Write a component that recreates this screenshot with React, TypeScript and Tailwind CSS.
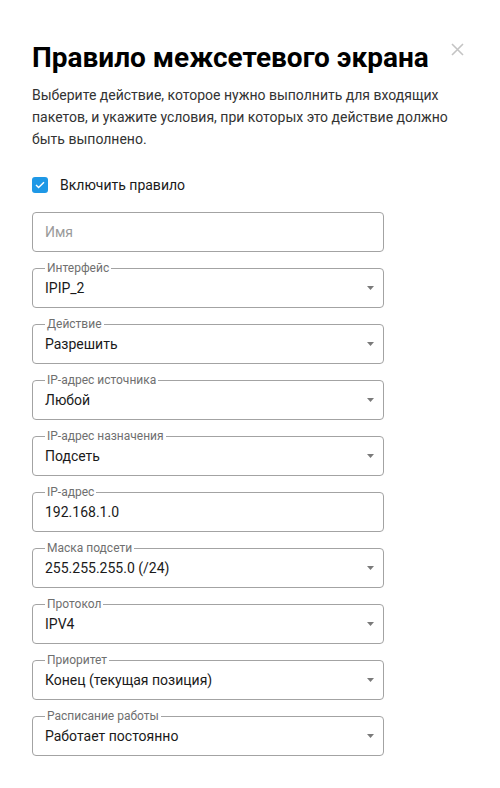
import React from 'react';

type Field = {
  label?: string;
  value?: string;
  placeholder?: string;
  select?: boolean;
};

const fields: Field[] = [
  { placeholder: 'Имя' },
  { label: 'Интерфейс', value: 'IPIP_2', select: true },
  { label: 'Действие', value: 'Разрешить', select: true },
  { label: 'IP-адрес источника', value: 'Любой', select: true },
  { label: 'IP-адрес назначения', value: 'Подсеть', select: true },
  { label: 'IP-адрес', value: '192.168.1.0' },
  { label: 'Маска подсети', value: '255.255.255.0 (/24)', select: true },
  { label: 'Протокол', value: 'IPV4', select: true },
  { label: 'Приоритет', value: 'Конец (текущая позиция)', select: true },
  { label: 'Расписание работы', value: 'Работает постоянно', select: true },
];

function FormField({ label, value, placeholder, select }: Field) {
  return (
    <div className="relative flex h-10 w-[352px] items-center rounded border border-[#a3a3a3] pl-3 pr-[9px]">
      {label && (
        <span className="absolute left-3 top-[-8px] bg-white px-0.5 text-[12px] leading-[14px] text-[#6f6f6f]">
          {label}
        </span>
      )}
      <span className={`flex-1 text-[14px] leading-5 ${value ? 'text-[#1a1a1a]' : 'text-[#9a9a9a]'}`}>
        {value ?? placeholder}
      </span>
      {select && (
        <svg width="7" height="4" viewBox="0 0 7 4" className="text-[#7a7a7a]">
          <path d="M0 0h7L3.5 4z" fill="currentColor" />
        </svg>
      )}
    </div>
  );
}

export default function App() {
  return (
    <div className="relative min-h-[788px] w-[500px] bg-white px-8 pt-10 font-['Roboto','Liberation_Sans',sans-serif]">
      {/* close */}
      <button className="absolute right-[36px] top-[43px] text-[#c4c4c4]">
        <svg width="13" height="13" viewBox="0 0 13 13">
          <path d="M1 1l11 11M12 1L1 12" stroke="currentColor" strokeWidth="1.6" />
        </svg>
      </button>

      <h1 className="text-[28px] font-bold leading-9 text-black">Правило межсетевого экрана</h1>
      <p className="mt-2 w-[436px] text-[14px] leading-[22px] text-[#333333]">
        Выберите действие, которое нужно выполнить для входящих пакетов, и укажите условия, при которых это действие должно быть выполнено.
      </p>

      <label className="mt-6 flex h-[22px] items-center gap-3">
        <span className="flex h-4 w-4 items-center justify-center rounded-[3px] bg-[#1e98e6]">
          <svg width="10" height="8" viewBox="0 0 10 8">
            <path d="M1 4l2.6 2.6L9 1.2" stroke="white" strokeWidth="1.4" fill="none" />
          </svg>
        </span>
        <span className="text-[14px] text-[#1a1a1a]">Включить правило</span>
      </label>

      <div className="mt-4 flex flex-col gap-4">
        {fields.map((f, i) => (
          <FormField key={i} {...f} />
        ))}
      </div>
    </div>
  );
}
